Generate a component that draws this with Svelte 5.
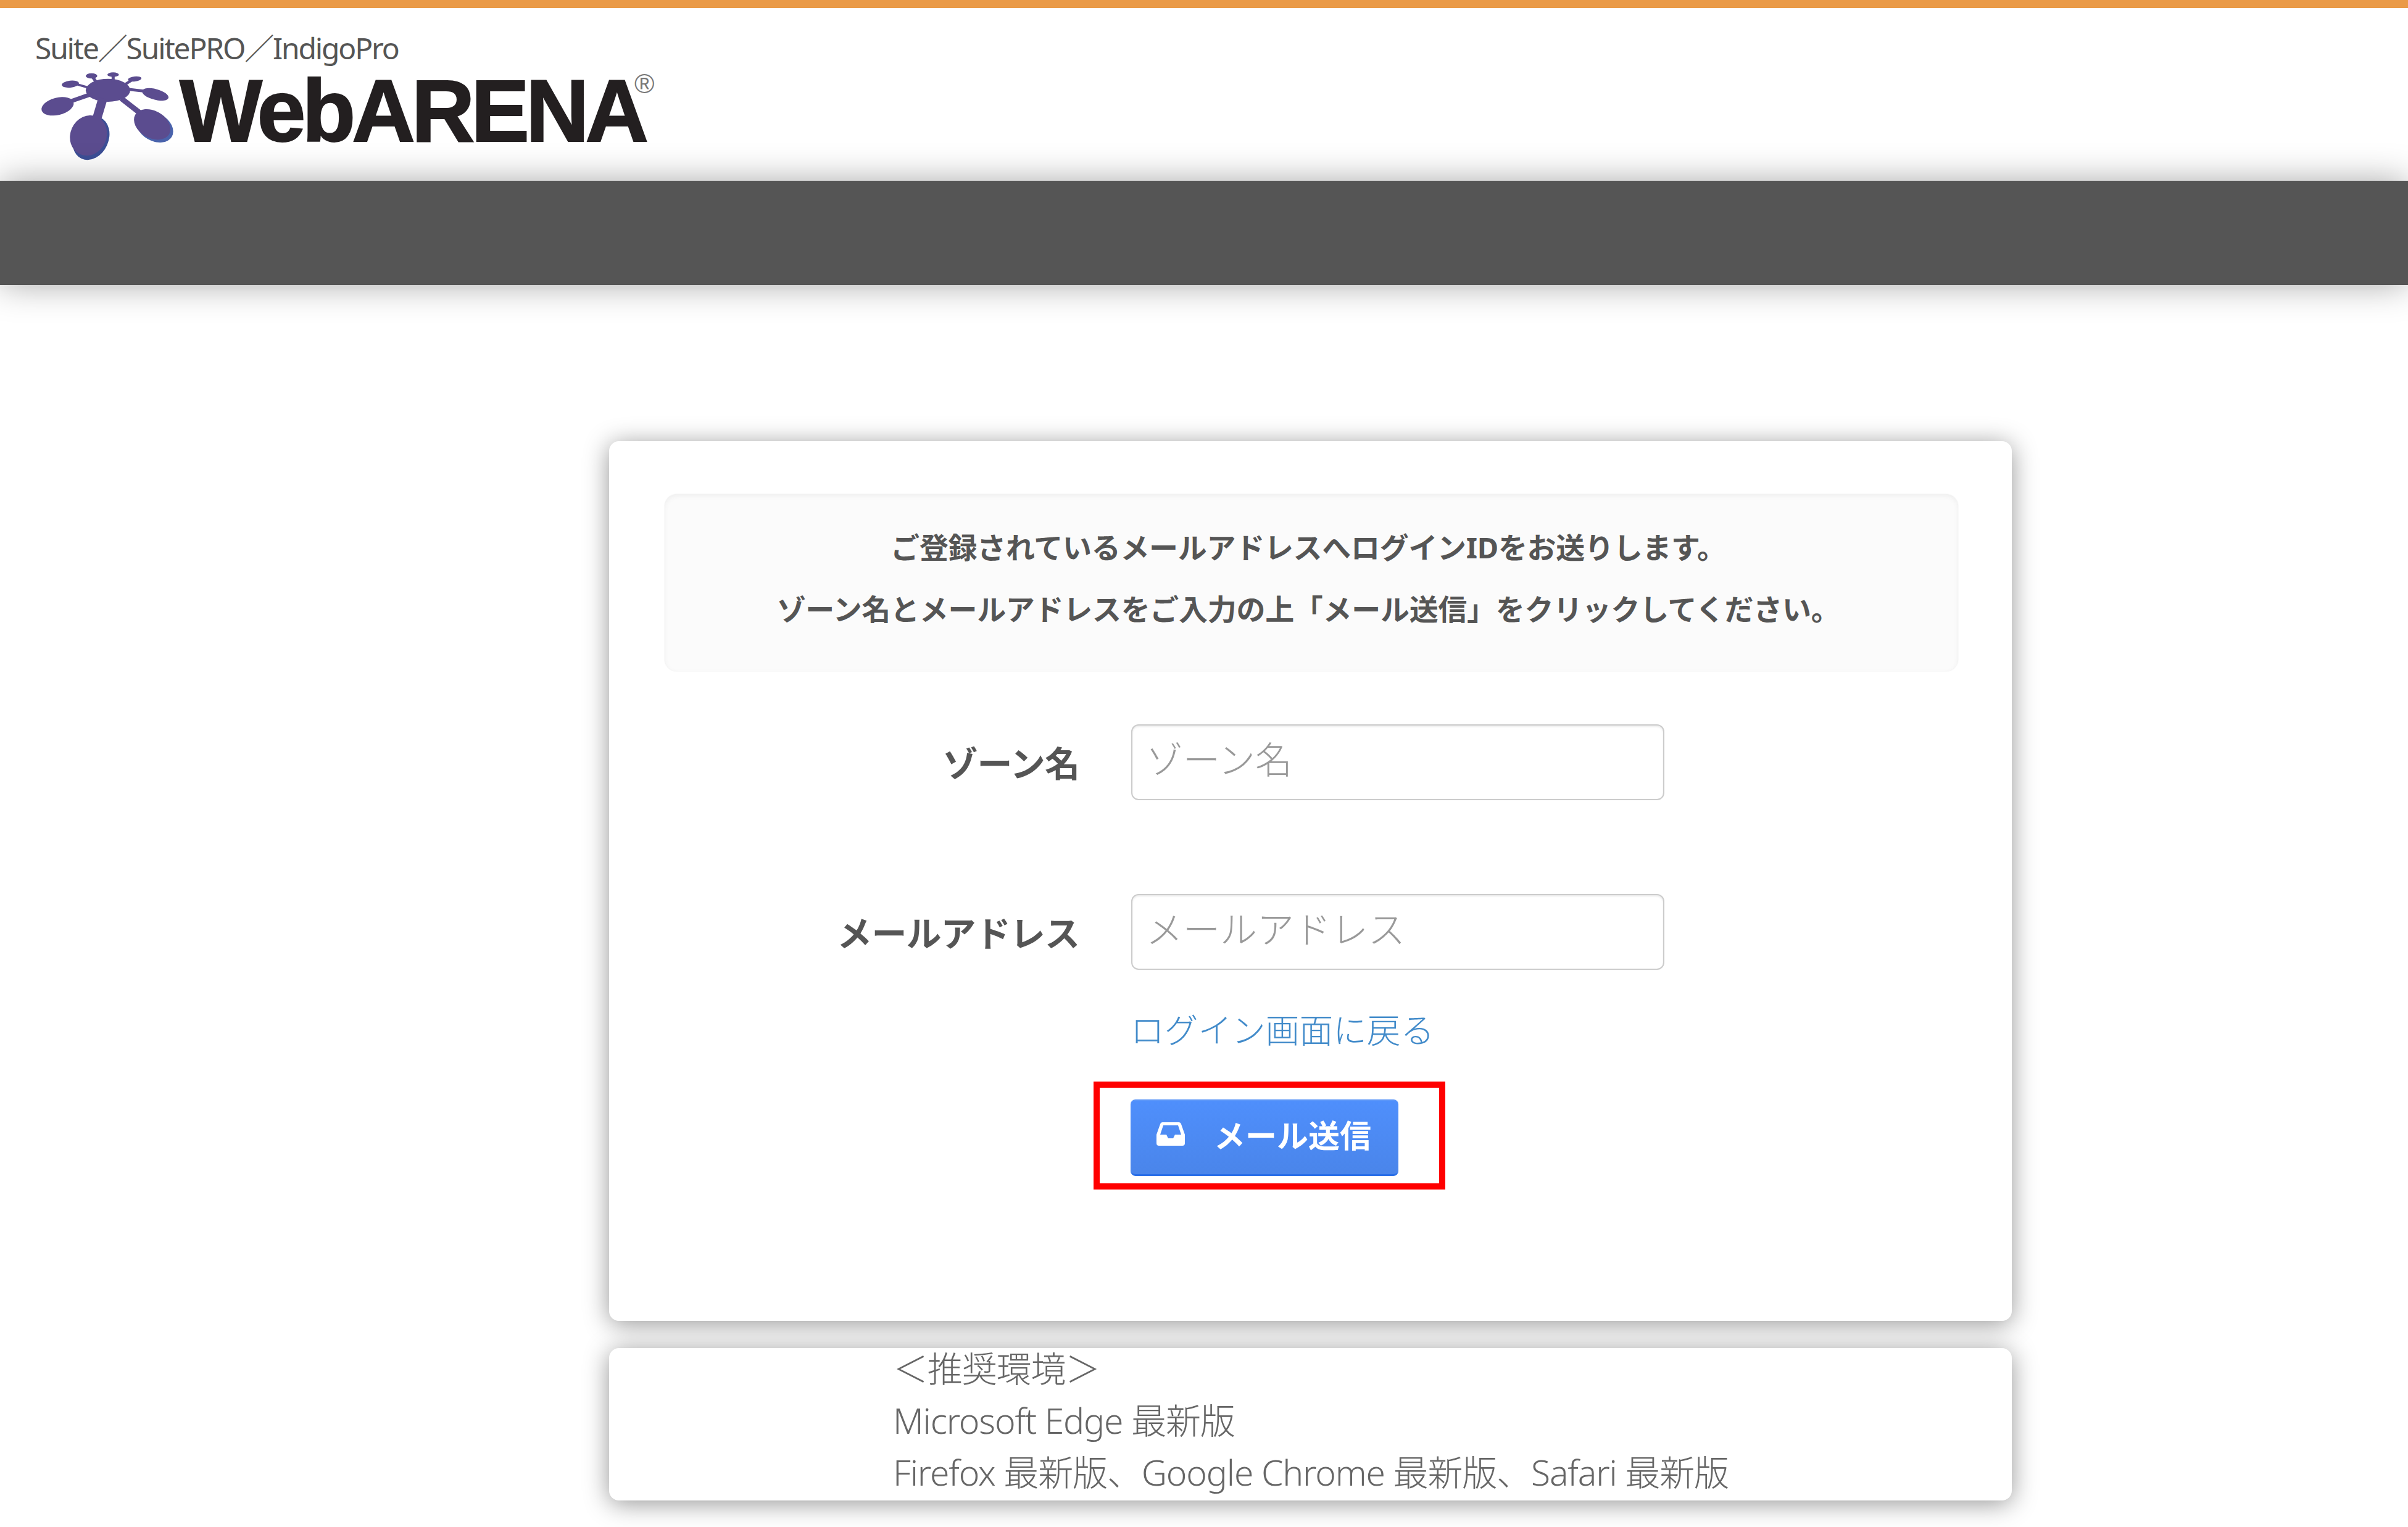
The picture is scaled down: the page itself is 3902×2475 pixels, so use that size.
<script>
  const reasons = ['ご登録されているメールアドレスへログインIDをお送りします。', 'ゾーン名とメールアドレスをご入力の上「メール送信」をクリックしてください。'];
  const env = ['＜推奨環境＞', 'Microsoft Edge 最新版', 'Firefox 最新版、Google Chrome 最新版、Safari 最新版'];
</script>

<header class="top">
  <div class="brand">
    <div class="suite">Suite／SuitePRO／IndigoPro</div>
    <div class="logo">
      <svg class="mark" viewBox="0 0 780 540" aria-hidden="true">
        <ellipse cx="322" cy="362" rx="86" ry="110" transform="rotate(24 322 362)" fill="#3c4f96"/>
        <ellipse cx="632" cy="308" rx="96" ry="68" transform="rotate(30 632 308)" fill="#4a63ac"/>
        <g fill="#5b4c8f" stroke="#5b4c8f">
          <ellipse cx="405" cy="130" rx="108" ry="56" stroke="none"/>
          <path d="M380 170 350 270" stroke-width="44" fill="none"/>
          <path d="M470 170 560 240" stroke-width="26" fill="none"/>
          <path d="M320 150 220 185" stroke-width="20" fill="none"/>
          <path d="M500 125 590 135" stroke-width="14" fill="none"/>
          <path d="M320 120 250 100" stroke-width="11" fill="none"/>
          <path d="M355 100 330 65" stroke-width="15" fill="none"/>
          <path d="M430 90V60" stroke-width="15" fill="none"/>
          <path d="M490 100 525 78" stroke-width="13" fill="none"/>
          <ellipse cx="310" cy="350" rx="88" ry="100" transform="rotate(24 310 350)" stroke="none"/>
          <ellipse cx="620" cy="296" rx="95" ry="66" transform="rotate(30 620 296)" stroke="none"/>
          <ellipse cx="160" cy="208" rx="80" ry="42" transform="rotate(-14 160 208)" stroke="none"/>
          <ellipse cx="635" cy="150" rx="66" ry="26" transform="rotate(15 635 150)" stroke="none"/>
          <ellipse cx="222" cy="100" rx="42" ry="17" transform="rotate(-6 222 100)" stroke="none"/>
          <ellipse cx="325" cy="60" rx="28" ry="13" stroke="none"/>
          <ellipse cx="430" cy="54" rx="28" ry="11" stroke="none"/>
          <ellipse cx="535" cy="75" rx="33" ry="12" transform="rotate(-6 535 75)" stroke="none"/>
        </g>
      </svg>
      <span class="word">WebARENA<sup>®</sup></span>
    </div>
  </div>
  <div class="bar"></div>
</header>

<main class="main">
  <section class="card form">
    <div class="info">
      {#each reasons as line}
        <p>{line}</p>
      {/each}
    </div>
    <div class="row first">
      <label for="zone">ゾーン名</label>
      <input id="zone" type="text" placeholder="ゾーン名" />
    </div>
    <div class="row second">
      <label for="mail">メールアドレス</label>
      <input id="mail" type="text" placeholder="メールアドレス" />
    </div>
    <a class="back" href="#top">ログイン画面に戻る</a>
    <div class="mark-box">
      <button type="button" class="send">
        <svg viewBox="0 0 46 38" aria-hidden="true">
          <path fill="#fff" fill-rule="evenodd" d="M10 0h26q3 0 4 3l6 17v14q0 4-4 4H4q-4 0-4-4V20L6 3q1-3 4-3ZM11 5 6 20h10l3 6h8l3-6h10L35 5Z"/>
        </svg>
        <span>メール送信</span>
      </button>
    </div>
  </section>
  <section class="card foot">
    <div class="env">
      {#each env as line}
        <div>{line}</div>
      {/each}
    </div>
  </section>
</main>

<style>
  :global(body) {
    margin: 0;
    background: #fff;
    font-family: "Noto Sans", "Noto Sans CJK JP", sans-serif;
    color: #555;
  }
  .top {
    border-top: 13px solid #ea9a47;
  }
  .brand {
    height: 280px;
    box-sizing: border-box;
    padding: 37px 0 0 57px;
    background: #fff;
  }
  .suite {
    font-size: 48px;
    line-height: 56px;
    letter-spacing: -2.2px;
    color: #555;
  }
  .logo {
    display: flex;
    align-items: flex-start;
    margin-top: 3px;
  }
  .mark {
    width: 260px;
    height: 180px;
    margin: -6px 0 0 -17px;
    flex: none;
  }
  .word {
    font-family: "Liberation Sans", sans-serif;
    font-weight: 700;
    font-size: 142px;
    line-height: 142px;
    letter-spacing: -6px;
    color: #231f20;
    -webkit-text-stroke: 2px #231f20;
    margin-left: -9px;
  }
  .word sup {
    font-size: 44px;
    font-weight: 400;
    line-height: 0;
    letter-spacing: 0;
    color: #777;
    -webkit-text-stroke: 0;
    vertical-align: 78px;
    margin-left: -17px;
  }
  .bar {
    height: 169px;
    background: #555;
    box-shadow: 0 0 56px rgba(0, 0, 0, 0.34);
    position: relative;
  }
  .main {
    margin-left: 987px;
    width: 2273px;
    padding: 253px 0 43px;
  }
  .card {
    background: #fff;
    border-radius: 16px;
    box-shadow: 0 5px 40px rgba(0, 0, 0, 0.42);
    box-sizing: border-box;
  }
  .form {
    height: 1426px;
    padding: 86px 87px 0 90px;
  }
  .info {
    height: 287px;
    box-sizing: border-box;
    padding: 36px 10px 0 0;
    background: #fbfbfb;
    border-radius: 20px;
    box-shadow: inset 0 3px 8px rgba(0, 0, 0, 0.05), 0 0 2px rgba(0, 0, 0, 0.1);
    text-align: center;
    font-weight: 700;
    font-size: 47px;
    letter-spacing: -0.3px;
    color: #555;
  }
  .info p {
    margin: 0;
    line-height: 100px;
  }
  .row {
    display: grid;
    grid-template-columns: 672px 864px;
    column-gap: 84px;
    align-items: center;
  }
  .first { margin-top: 86px; }
  .second { margin-top: 152px; }
  label {
    text-align: right;
    font-weight: 700;
    font-size: 57px;
    letter-spacing: -0.9px;
    color: #555;
    transform: translateY(-1px);
  }
  input {
    height: 123px;
    width: 100%;
    box-sizing: border-box;
    border: 2px solid #ccc;
    border-radius: 12px;
    box-shadow: inset 0 2px 3px rgba(0, 0, 0, 0.08);
    padding: 0 22px 10px;
    font: inherit;
    font-size: 60px;
    color: #555;
    outline: none;
  }
  input::placeholder {
    color: #999;
    opacity: 1;
    font-weight: 300;
  }
  .back {
    display: block;
    width: max-content;
    margin: 57px 0 0 755px;
    font-size: 54.7px;
    line-height: 80px;
    color: #428bca;
    text-decoration: none;
    font-weight: 300;
  }
  .mark-box {
    margin: 44px 0 0 695px;
    width: 570px;
    height: 175px;
    box-sizing: border-box;
    border: 10px solid #f00;
    padding: 19px 0 0 50px;
  }
  .send {
    display: flex;
    align-items: center;
    width: 434px;
    height: 124px;
    box-sizing: border-box;
    padding: 0 0 12px 42px;
    border: 0;
    border-bottom: 3px solid #2a6fe8;
    border-top: 2px solid #5d97f7;
    border-radius: 8px;
    background: linear-gradient(#4f8ffc, #4a85ea);
    color: #fff;
    font: inherit;
    font-weight: 700;
    font-size: 51px;
  }
  .send svg {
    width: 46px;
    height: 38px;
    flex: none;
  }
  .send span {
    margin-left: 47px;
  }
  .foot {
    margin-top: 44px;
    height: 247px;
    padding-left: 460px;
    display: flow-root;
  }
  .env {
    margin-top: -9px;
    font-size: 57px;
    line-height: 84px;
    letter-spacing: -1.15px;
    color: #666;
    font-weight: 300;
  }
</style>
